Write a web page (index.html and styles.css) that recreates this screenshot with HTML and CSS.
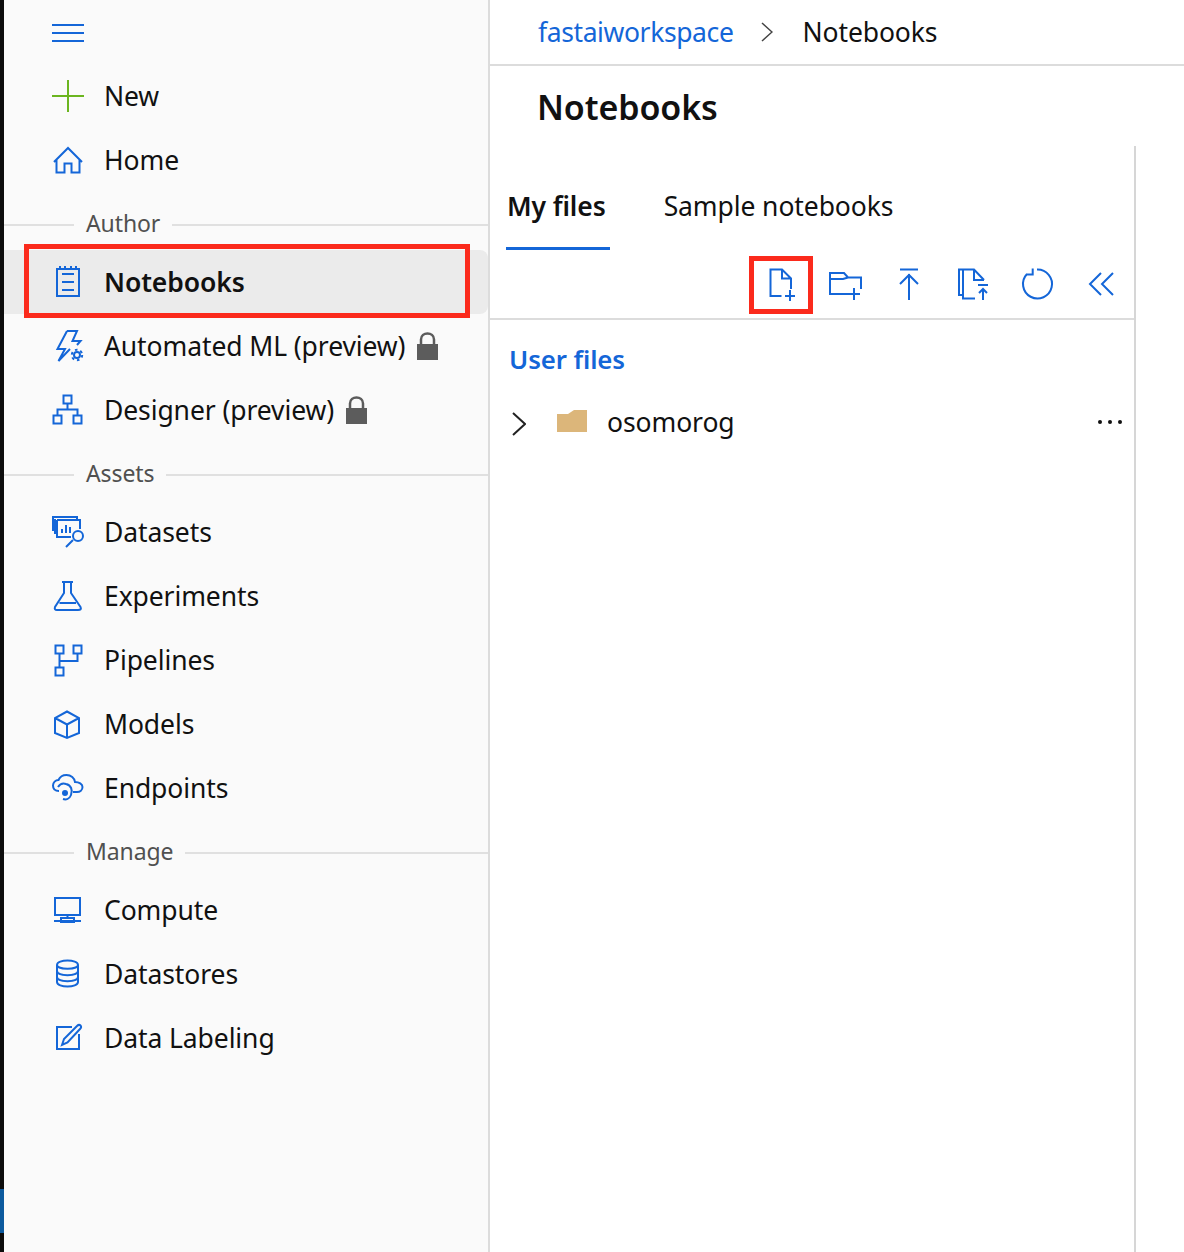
FILE: index.html
```html
<!DOCTYPE html>
<html lang="en">
<head>
<meta charset="utf-8">
<title>Notebooks</title>
<link rel="stylesheet" href="styles.css">
</head>
<body>
<div class="strip"><span class="strip-mark"></span></div>
<nav class="sidebar">
  <div class="row">
    <svg class="ico" viewBox="0 0 32 32"><path d="M0 9H32M0 17H32M0 25H32"/></svg>
  </div>
  <div class="row">
    <svg class="ico green" viewBox="0 0 32 32"><path d="M0 16H32M16 0V32"/></svg><span>New</span>
  </div>
  <div class="row">
    <svg class="ico" viewBox="0 0 32 32"><path d="M2 18L16 4L30 18M4.500 15.500V28.500H12.500V19.500H19.500V28.500H27.500V15.500"/></svg><span>Home</span>
  </div>
  <div class="section"><span>Author</span></div>
  <div class="row active">
    <svg class="ico" viewBox="0 0 32 32"><path d="M5 3H27V30H5ZM10 8H22M10 16H22M10 24H22M8 0V3M13 0V3M19 0V3M24 0V3"/></svg><span>Notebooks</span>
    <div class="callout-nav"></div>
  </div>
  <div class="row">
    <svg class="ico" viewBox="0 0 32 32"><path d="M15 1H25L20.500 11H28.500L25 15M15 1L5.500 19H13L6.500 31L18 19"/><circle cx="25" cy="25" r="3"/><circle class="teeth" cx="25" cy="25" r="5.200"/></svg><span>Automated ML (preview)</span>
    <svg class="lock" viewBox="0 0 21 28"><path class="shackle" d="M4 12V7.500C4 -0.500 17 -0.500 17 7.500V12"/><rect class="body" x="0" y="12" width="21" height="16"/></svg>
  </div>
  <div class="row">
    <svg class="ico" viewBox="0 0 32 32"><path d="M11.500 1.500H19.500V9.500H11.500ZM1.500 21.500H9.500V29.500H1.500ZM21.500 21.500H29.500V29.500H21.500ZM15.500 9.500V15.500M5.500 21.500V15.500H25.500V21.500"/></svg><span>Designer (preview)</span>
    <svg class="lock" viewBox="0 0 21 28"><path class="shackle" d="M4 12V7.500C4 -0.500 17 -0.500 17 7.500V12"/><rect class="body" x="0" y="12" width="21" height="16"/></svg>
  </div>
  <div class="section"><span>Assets</span></div>
  <div class="row">
    <svg class="ico" viewBox="0 0 32 32"><path d="M1 15V1H25V4M3 18V3M5 4H28V13M5 4V21H19M10 17V13M14 17V9M18 17V11M14 31L21 24"/><circle cx="26" cy="20" r="5"/></svg><span>Datasets</span>
  </div>
  <div class="row">
    <svg class="ico" viewBox="0 0 32 32"><path d="M10 2H21M12 2V13L3 27Q2 30 5 30H26Q30 30 28.500 27L19 13V2M7.500 23H24"/></svg><span>Experiments</span>
  </div>
  <div class="row">
    <svg class="ico" viewBox="0 0 32 32"><path d="M3.500 1.500H11.500V9.500H3.500ZM21.500 1.500H29.500V9.500H21.500ZM3.500 23.500H11.500V31.500H3.500ZM7.500 9.500V23.500M7.500 17H25.500V9.500"/></svg><span>Pipelines</span>
  </div>
  <div class="row">
    <svg class="ico" viewBox="0 0 32 32"><path d="M15 3.500L27 10V25L15 30L3 25V10ZM3 10L15 16.500L27 10M15 16.500V30"/></svg><span>Models</span>
  </div>
  <div class="row">
    <svg class="ico" viewBox="0 0 32 32"><path d="M7 19C3 19 1 16.500 1 13.500C1 10.500 3.500 8 6.500 8C8 4.500 11.500 3 14.500 3C19 3 22.500 6 23 10C27 10 30.500 12 30.500 15C30.500 18 28 20 25 20H21M6 15C8 12 11 11 14 12C19 13 21 18 19 23C17.500 27 14 28 11 27"/><circle class="fill" cx="13" cy="21" r="3"/></svg><span>Endpoints</span>
  </div>
  <div class="section"><span>Manage</span></div>
  <div class="row">
    <svg class="ico" viewBox="0 0 32 32"><path d="M3 4H28V21H3ZM15.500 21V24M2 27H29M9 24H22V28H9Z"/></svg><span>Compute</span>
  </div>
  <div class="row">
    <svg class="ico" viewBox="0 0 32 32"><path d="M5 7V24C5 30 26 30 26 24V7M5 7C5 1 26 1 26 7C26 12 5 12 5 7ZM5 13C5 18.500 26 18.500 26 13M5 19C5 24.500 26 24.500 26 19"/></svg><span>Datastores</span>
  </div>
  <div class="row">
    <svg class="ico" viewBox="0 0 32 32"><path d="M20 5H5V27H27V12M10 23L12 17L25 4Q27 2 28.500 3.500Q30 5 28 7L15.500 20.500Z"/></svg><span>Data Labeling</span>
  </div>
</nav>
<main class="main">
  <header class="crumbs">
    <a class="crumb-link">fastaiworkspace</a>
    <svg class="crumb-sep" viewBox="0 0 12 20"><path d="M1 1L11 10L1 19"/></svg>
    <span>Notebooks</span>
  </header>
  <h1 class="title">Notebooks</h1>
  <section class="panel">
    <div class="tabs">
      <div class="tab selected">My files</div>
      <div class="tab">Sample notebooks</div>
    </div>
    <div class="toolbar">
      <div class="tool">
        <svg class="ico" viewBox="0 0 32 32"><path d="M16.500 28H5.500V1.500H17L26 10.500V21M17 1.500V10.500H26M25 22V33M20 28H30"/></svg>
        <div class="callout-tool"></div>
      </div>
      <div class="tool">
        <svg class="ico" viewBox="0 0 32 32"><path d="M19 26H1V5H15L19 9.500H32V21M1 11H14L19 9.500M25 20V32M19 26H31"/></svg>
      </div>
      <div class="tool">
        <svg class="ico" viewBox="0 0 32 32"><path d="M7 1.500H25M16 6V32M7 16L16 7L25 16"/></svg>
      </div>
      <div class="tool">
        <svg class="ico" viewBox="0 0 32 32"><path d="M6 1.500H2V27H6M6 1.500V30.500H18M6 1.500H17L27 12M17 1.500V12H27M21 17H31M26 32V21M22 25L26 21L30 25"/></svg>
      </div>
      <div class="tool">
        <svg class="ico" viewBox="0 0 32 32"><path d="M16 1.500A14.500 14.500 0 1 1 6 6M11.700 0.500V6.500H5.500"/></svg>
      </div>
      <div class="tool">
        <svg class="ico" viewBox="0 0 32 32"><path d="M16 5L5 16L16 27M28 5L17 16L28 27"/></svg>
      </div>
    </div>
    <h2 class="files-heading">User files</h2>
    <div class="tree-row">
      <svg class="tree-chevron" viewBox="0 0 14 24"><path d="M1 1L13 12L1 23"/></svg>
      <svg class="folder" viewBox="0 0 30 22"><path d="M0 4H11L17 0H30V22H0Z"/></svg>
      <span class="tree-name">osomorog</span>
      <svg class="more" viewBox="0 0 26 6"><circle cx="3" cy="3" r="2"/><circle cx="13" cy="3" r="2"/><circle cx="23" cy="3" r="2"/></svg>
    </div>
  </section>
</main>
</body>
</html>
```
FILE: styles.css
```css
* { box-sizing: border-box; }
html, body { margin: 0; height: 1252px; overflow: hidden; }
body {
  display: flex;
  background: #fff;
  color: #111;
  font-family: "Noto Sans", "Open Sans", sans-serif;
  font-size: 26.500px;
  letter-spacing: -0.1px;
}
.strip { width: 4px; background: #0c0c0c; position: relative; }
.strip-mark { position: absolute; left: 0; top: 1189px; width: 4px; height: 44px; background: #0c5a9e; }
.sidebar { width: 486px; background: #fafafa; border-right: 2px solid #dcdcdc; }
.row {
  position: relative;
  height: 64px;
  display: flex;
  align-items: center;
  padding-left: 48px;
  white-space: nowrap;
}
.row > span { margin-left: 20px; }
.ico {
  width: 32px;
  height: 32px;
  flex: none;
  overflow: visible;
  fill: none;
  stroke: #1466d8;
  stroke-width: 2;
}
.ico.green { stroke: #6bb51f; }
.ico .fill { fill: #1466d8; stroke: none; }
.ico .teeth { stroke-dasharray: 2.600 2.850; }
.row.active {
  background: #ebebeb;
  border-radius: 0 8px 8px 0;
  font-weight: 600;
}
.callout-nav {
  position: absolute;
  left: 20px;
  top: -6px;
  width: 446px;
  height: 74px;
  border: 5px solid #fb2a1c;
}
.lock { width: 21px; height: 28px; margin-left: 12px; flex: none; }
.lock .shackle { fill: none; stroke: #5c5c5c; stroke-width: 2.500; }
.lock .body { fill: #5c5c5c; }
.section { height: 58px; display: flex; align-items: flex-start; }
.section::before { content: ""; width: 70px; height: 2px; margin-top: 32px; background: #e0e0e0; flex: none; }
.section::after { content: ""; flex: 1; height: 2px; margin-top: 32px; background: #e0e0e0; }
.section span { padding: 0 12px; font-size: 23px; color: #505050; line-height: 62px; }
.main { flex: 1; min-width: 0; display: flex; flex-direction: column; }
.crumbs {
  height: 66px;
  flex: none;
  border-bottom: 2px solid #dcdcdc;
  padding: 0 0 0 48px;
  display: flex;
  align-items: center;
}
.crumb-link { color: #1466d8; letter-spacing: -0.4px; }
.crumb-sep { width: 12px; height: 20px; margin: 0 29px 0 28px; fill: none; stroke: #444; stroke-width: 1.500; }
.title { margin: 0; height: 80px; padding-left: 47px; font-size: 34px; font-weight: 600; line-height: 82px; }
.panel { flex: 1; width: 646px; border-right: 2px solid #d6d6d6; display: flex; flex-direction: column; }
.tabs { height: 104px; flex: none; display: flex; padding-left: 16px; gap: 52px; }
.tab { height: 104px; padding: 0 2px; line-height: 120px; }
.tab.selected { font-weight: 600; padding: 0 4px 0 1px; border-bottom: 3px solid #1466d8; }
.toolbar {
  height: 70px;
  flex: none;
  display: flex;
  justify-content: flex-end;
  border-bottom: 2px solid #dcdcdc;
  padding-right: 1px;
}
.tool { position: relative; width: 64px; display: flex; align-items: center; justify-content: center; }
.callout-tool {
  position: absolute;
  left: 0;
  top: 6px;
  width: 64px;
  height: 58px;
  border: 5px solid #fb2a1c;
}
.files-heading { margin: 0; height: 78px; padding-left: 19px; font-size: 25.800px; font-weight: 600; color: #1466d8; line-height: 78px; }
.tree-row { height: 50px; display: flex; align-items: center; padding-left: 22px; }
.tree-chevron { width: 14px; height: 24px; flex: none; fill: none; stroke: #222; stroke-width: 2; margin-top: 2px; }
.folder { width: 30px; height: 22px; flex: none; fill: #dcb67a; margin-left: 31px; margin-top: -4px; }
.tree-name { margin-left: 20px; margin-bottom: 2px; }
.more { width: 26px; height: 6px; margin-left: auto; margin-right: 11px; fill: #111; flex: none; margin-top: -2px; }
```
